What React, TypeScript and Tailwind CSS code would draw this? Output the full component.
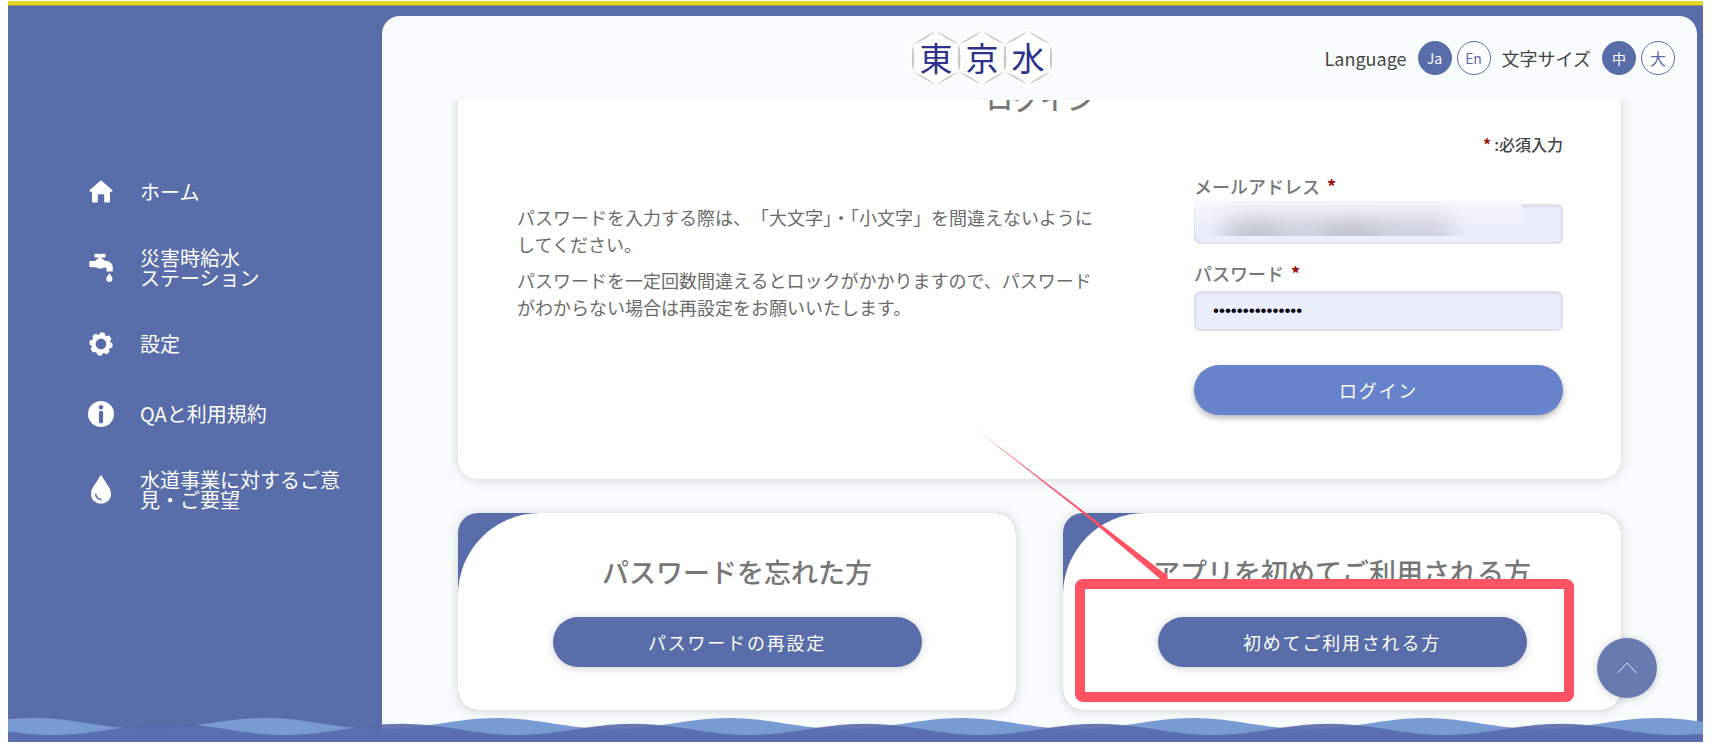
import { ReactNode, useState } from 'react'

const HomeIcon = () => (
  <svg aria-hidden="true" className="h-[26px] w-[26px]" fill="#fff" viewBox="0 0 26 26">
    <path d="M12.1 1.9a1.3 1.3 0 0 1 1.8 0L24.2 11c.7.7.3 1.7-.6 1.7H22v9.6c0 .8-.4 1.2-1.2 1.2h-3.6c-.6 0-1-.4-1-1v-6.3c0-.6-.4-1-1-1h-4.4c-.6 0-1 .4-1 1v6.3c0 .6-.4 1-1 1H5.200c-.8 0-1.200-.4-1.200-1.200v-9.600H2.400c-.9 0-1.300-1-.6-1.700z" />
  </svg>
)

const FaucetIcon = () => (
  <svg aria-hidden="true" className="h-[30px] w-[26px]" fill="#fff" viewBox="0 0 26 30">
    <path d="M7.500.8h3.400l1.100.6 1.100-.6h3.400c1.500 0 1.500 3.800 0 3.800h-2.900v1c1.200.2 1.900.8 2.200 1.700l2.900.8c3.900.6 6.100 3 6.100 6.500v3.800h-6.300v-2.300c0-1.100-.7-1.700-1.700-1.700h-1.100c-.7 1.500-6.200 1.700-7.400-.2H2.700c-.9 0-1.400-.4-1.400-1.100V9.100c0-.7.500-1.100 1.400-1.100h4.200c1-.4 1.600-1.800 3.400-2.400v-1H7.500C6 4.600 6 .8 7.500.8z" />
    <path d="M21.400 20.200c.9 1.700 3.100 3.600 3.100 5.600 0 4.300-6.300 4.300-6.300 0 0-2 2.300-3.900 3.200-5.600z" />
  </svg>
)

const teeth = [0, 45, 90, 135, 180, 225, 270, 315]

const GearIcon = () => (
  <svg aria-hidden="true" className="h-[26px] w-[26px]" fill="#fff" viewBox="0 0 26 26">
    <circle cx="13" cy="13" fill="none" r="7.600" stroke="#fff" strokeWidth="4.400" />
    <g transform="rotate(8 13 13)">
      {teeth.map((deg) => (
        <rect height="5" key={deg} rx="1.600" transform={`rotate(${deg} 13 13)`} width="5.400" x="10.300" y="1.400" />
      ))}
    </g>
  </svg>
)

const InfoIcon = () => (
  <svg aria-hidden="true" className="h-[26px] w-[26px]" viewBox="0 0 26 26">
    <circle cx="13" cy="13" fill="#fff" r="13" />
    <circle cx="13" cy="6.200" fill="#586da9" r="2.200" />
    <rect fill="#586da9" height="12.600" rx="2" width="4.200" x="10.900" y="9.800" />
  </svg>
)

const DropIcon = () => (
  <svg aria-hidden="true" className="h-[30px] w-[26px]" viewBox="0 0 26 30">
    <path
      d="M13 .4c.8 0 1.200.7 1.600 1.700C16.600 7.100 23 12.600 23 18.900 23 24.800 18.500 28.500 13 28.500S3 24.800 3 18.900C3 12.600 9.400 7.100 11.400 2.100 11.800 1.100 12.200.4 13 .4z"
      fill="#fff"
    />
    <path d="M7.700 19.200c.4 3.200 2.300 5 5.300 5.200" fill="none" stroke="#586da9" strokeLinecap="round" strokeWidth="1.500" />
  </svg>
)

const hexagons = [
  { x: 28, char: '東' },
  { x: 74, char: '京' },
  { x: 120, char: '水' },
]

const Logo = () => (
  <svg aria-label="東京水" className="h-[62px] w-[148px] shrink-0" role="img" viewBox="0 0 148 62">
    {hexagons.map(({ x }) => (
      <polygon
        fill="#fff"
        key={x}
        points="0,-27 23,-13.500 23,13.500 0,27 -23,13.500 -23,-13.500"
        stroke="#fff"
        strokeLinejoin="round"
        strokeWidth="5"
        transform={`translate(${x} 31)`}
      />
    ))}
    {hexagons.map(({ x, char }) => (
      <g key={char} transform={`translate(${x} 31)`}>
        <g fill="#c9c9c9">
          <path d="M0-27Q-13-21-23-13.500-11-18 0-27z" />
          <path d="M0-27Q13-21 23-13.500 11-18 0-27z" />
          <path d="M0 27Q-13 21-23 13.500-11 18 0 27z" />
          <path d="M0 27Q13 21 23 13.500 11 18 0 27z" />
          <path d="M-23-13.500Q-25.500 0-23 13.500-20.500 0-23-13.500z" />
          <path d="M23-13.500Q25.500 0 23 13.500 20.500 0 23-13.500z" />
        </g>
        <text
          className="font-['Noto_Sans_CJK_JP',sans-serif] text-[33px]"
          fill="#2b318c"
          textAnchor="middle"
          x="0"
          y="13"
        >
          {char}
        </text>
      </g>
    ))}
  </svg>
)

const Waves = () => (
  <svg aria-hidden="true" className="pointer-events-none absolute bottom-0 left-0 h-6 w-full">
    <defs>
      <pattern height="24" id="wave-back" patternUnits="userSpaceOnUse" width="232" x="25" y="0">
        <path d="M0 0C42 0 74 11.400 116 11.400S190 0 232 0V24H0z" fill="#799bd4" />
      </pattern>
      <pattern height="24" id="wave-front" patternUnits="userSpaceOnUse" width="232" x="161" y="0">
        <path d="M0 5.800C42 5.800 74 17 116 17S190 5.800 232 5.800V24H0z" fill="#586aab" fillOpacity=".9" />
      </pattern>
    </defs>
    <rect fill="url(#wave-back)" height="24" width="100%" />
    <rect fill="url(#wave-front)" height="24" width="100%" />
  </svg>
)

const navItems: { icon: ReactNode; label: ReactNode; href: string }[] = [
  { icon: <HomeIcon />, label: 'ホーム', href: '#home' },
  {
    icon: <FaucetIcon />,
    label: (
      <>
        災害時給水
        <br />
        ステーション
      </>
    ),
    href: '#station',
  },
  { icon: <GearIcon />, label: '設定', href: '#settings' },
  { icon: <InfoIcon />, label: 'QAと利用規約', href: '#qa' },
  { icon: <DropIcon />, label: '水道事業に対するご意見・ご要望', href: '#opinion' },
]

const Sidebar = () => (
  <nav className="w-[374px] shrink-0 pt-[172px] pl-20">
    <ul className="flex flex-col gap-[42px]">
      {navItems.map(({ icon, label, href }) => (
        <li key={href}>
          <a className="flex min-h-7 items-center gap-[26px] text-xl leading-5 text-white" href={href}>
            {icon}
            <span className="w-[208px]">{label}</span>
          </a>
        </li>
      ))}
    </ul>
  </nav>
)

interface RoundButtonProps {
  active: boolean
  className: string
  children: ReactNode
  onClick: () => void
}

const RoundButton = ({ active, className, children, onClick }: RoundButtonProps) => (
  <button
    aria-pressed={active}
    className={`flex h-[34px] w-[34px] items-center justify-center rounded-full border border-[#586da9] ${
      active ? 'bg-[#586da9] text-white' : 'bg-white text-[#586da9]'
    } ${className}`}
    type="button"
    onClick={onClick}
  >
    {children}
  </button>
)

const Header = () => {
  const [lang, setLang] = useState('ja')
  const [size, setSize] = useState('medium')

  return (
    <header className="flex h-[84px] shrink-0 items-center justify-between pr-[22px] pl-[40%]">
      <Logo />
      <div className="flex items-center gap-[11px] text-lg text-[#444]">
        <span>Language</span>
        <div className="flex gap-[5px]">
          <RoundButton active={lang === 'ja'} className="text-sm" onClick={() => setLang('ja')}>
            Ja
          </RoundButton>
          <RoundButton active={lang === 'en'} className="text-sm" onClick={() => setLang('en')}>
            En
          </RoundButton>
        </div>
        <span>文字サイズ</span>
        <div className="flex gap-[5px]">
          <RoundButton active={size === 'medium'} className="text-sm" onClick={() => setSize('medium')}>
            中
          </RoundButton>
          <RoundButton active={size === 'large'} className="text-base" onClick={() => setSize('large')}>
            大
          </RoundButton>
        </div>
      </div>
    </header>
  )
}

const Required = () => <span className="mx-[3px] font-bold text-[#a01010]">*</span>

const inputClass =
  "block h-10 w-full rounded-md border-2 border-[#e0e2ea] bg-[#ebeeff] px-[17px] font-['Liberation_Sans',sans-serif] text-[17px] text-black shadow-[inset_0_1px_3px_rgba(0,0,0,0.08)] outline-none"

const LoginForm = () => {
  const [email, setEmail] = useState('')
  const [password, setPassword] = useState('tokyo-water-app')

  return (
    <form className="w-[369px] shrink-0" onSubmit={(e) => e.preventDefault()}>
      <label className="mb-1 block text-lg leading-[27px] font-medium text-[#777]" htmlFor="email">
        メールアドレス <Required />
      </label>
      <div className="relative mb-4">
        <input className={inputClass} id="email" type="email" value={email} onChange={(e) => setEmail(e.target.value)} />
        {/* privacy mask over the address */}
        <div className="pointer-events-none absolute -top-[3px] left-px h-[35px] w-[327px] overflow-hidden bg-linear-to-b from-[#f6f7fb] to-[#e9edfc]">
          <div className="absolute top-4 left-6 h-9 w-[236px] rounded-full bg-[#c4c6d2] opacity-70 blur-[10px]" />
          <div className="absolute top-6 left-11 h-6 w-10 rounded-full bg-[#b4b6c2] opacity-60 blur-[10px]" />
          <div className="absolute top-6 left-32 h-6 w-14 rounded-full bg-[#b4b6c2] opacity-60 blur-[10px]" />
        </div>
      </div>
      <label className="mb-1 block text-lg leading-[27px] font-medium text-[#777]" htmlFor="password">
        パスワード <Required />
      </label>
      <input
        className={inputClass}
        id="password"
        type="password"
        value={password}
        onChange={(e) => setPassword(e.target.value)}
      />
      <button
        className="mt-[34px] h-[50px] w-full rounded-full bg-[#6783cc] text-lg tracking-widest text-white shadow-[0_3px_6px_rgba(0,0,0,0.3)]"
        type="submit"
      >
        ログイン
      </button>
    </form>
  )
}

interface LinkCardProps {
  title: string
  action: string
  children?: ReactNode
}

const LinkCard = ({ title, action, children }: LinkCardProps) => (
  <section className="relative">
    <div className="overflow-hidden rounded-[20px] bg-[#586da9] shadow-[0_1px_12px_rgba(0,0,0,0.16)]">
      <div className="flex flex-col items-center rounded-tl-[82px] bg-white pt-[39px] pb-[43px]">
        <h2 className="text-[27px] leading-10 font-medium text-[#777]">{title}</h2>
        <button
          className="mt-[25px] h-[50px] w-[369px] rounded-full bg-[#586da9] text-lg tracking-widest text-white shadow-[0_1px_8px_rgba(0,0,0,0.2)]"
          type="button"
        >
          {action}
        </button>
      </div>
    </div>
    {children}
  </section>
)

const Callout = () => (
  <>
    <svg aria-hidden="true" className="pointer-events-none absolute -top-[86px] -left-[90px] h-[156px] w-[200px]">
      <defs>
        <linearGradient id="arrow-fade" x1="0" x2="1" y1="0" y2="1">
          <stop offset="0" stopColor="#ff5263" stopOpacity=".4" />
          <stop offset=".15" stopColor="#ff5263" />
        </linearGradient>
      </defs>
      <path d="M0 0L110.600 84.200 191 146 194 146 195 153 188 153 186 151 109.400 86z" fill="url(#arrow-fade)" />
    </svg>
    <div className="pointer-events-none absolute top-[66px] right-[47px] bottom-2 left-3 rounded-lg border-[10px] border-[#ff5263]" />
  </>
)

export default function App() {
  return (
    <div className="h-screen bg-white pt-px pr-[9px] pb-[3px] pl-2 font-['Noto_Sans_CJK_JP',sans-serif]" lang="ja">
      <div className="relative flex h-full flex-col overflow-hidden border-t-4 border-[#e6d724] bg-[#586da9]">
        <div className="h-px shrink-0 bg-[#9c9758]" />
        <div className="flex min-h-0 flex-1">
          <Sidebar />
          <main className="mt-[10px] mr-[6px] flex min-w-0 flex-1 flex-col overflow-hidden rounded-t-[18px] bg-[#f8fcfd]">
            <Header />
            <div className="min-h-0 flex-1 overflow-hidden px-[76px]">
              <section className="-mt-[61px] rounded-[20px] bg-white pt-10 pr-[58px] pb-16 pl-[59px] shadow-[0_1px_12px_rgba(0,0,0,0.16)]">
                <h1 className="text-center text-[27px] leading-10 font-medium text-[#777]">ログイン</h1>
                <p className="mt-[13px] mb-[17px] text-right text-base leading-6 font-medium text-[#444]">
                  <Required />
                  :必須入力
                </p>
                <div className="flex justify-between gap-10">
                  <div className="flex max-w-[580px] flex-col gap-[9px] pt-[31px] text-lg leading-[27px] text-[#6b6b6b]">
                    <p>パスワードを入力する際は、&#8203;「大文字」・「小文字」を間違えないようにしてください。</p>
                    <p>
                      パスワードを一定回数間違えるとロックがかかりますので、パスワードがわからない場合は再設定をお願いいたします。
                    </p>
                  </div>
                  <LoginForm />
                </div>
              </section>
              <div className="mt-[34px] grid grid-cols-2 gap-[47px]">
                <LinkCard action="パスワードの再設定" title="パスワードを忘れた方" />
                <LinkCard action="初めてご利用される方" title="アプリを初めてご利用される方">
                  <Callout />
                </LinkCard>
              </div>
            </div>
          </main>
        </div>
        <Waves />
        <button
          aria-label="ページの先頭へ"
          className="absolute right-[46px] bottom-11 flex h-[60px] w-[60px] items-center justify-center rounded-full bg-[#586da9]/90 shadow-[0_1px_8px_rgba(0,0,0,0.2)]"
          type="button"
        >
          <svg aria-hidden="true" className="h-3 w-5" fill="none" stroke="#e4e8f4" viewBox="0 0 20 12">
            <path d="M.5 11L10 1l9.500 10" />
          </svg>
        </button>
      </div>
    </div>
  )
}
